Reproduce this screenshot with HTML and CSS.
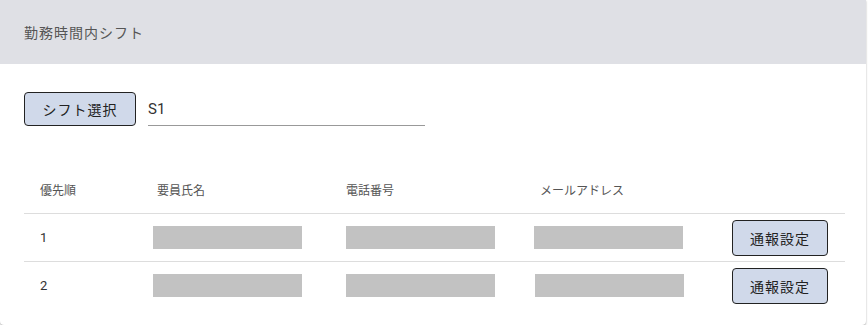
FILE: index.html
```html
<!DOCTYPE html>
<html lang="ja">

<head>
    <meta charset="UTF-8">
    <meta name="viewport" content="width=device-width, initial-scale=1.0">
    <title>勤務時間内シフト</title>
    <link rel="stylesheet" href="styles.css">
</head>

<body>
    <div class="card">
        <div class="card-header">勤務時間内シフト</div>
        <div class="card-body">
            <div class="shift-row">
                <button type="button" class="btn">シフト選択</button>
                <input type="text" class="shift-input" value="S1">
            </div>

            <div class="table">
                <div class="row head">
                    <div class="cell">優先順</div>
                    <div class="cell name-head">要員氏名</div>
                    <div class="cell">電話番号</div>
                    <div class="cell mail-head">メールアドレス</div>
                    <div class="cell"></div>
                </div>
                <div class="row">
                    <div class="cell">1</div>
                    <div class="cell"><span class="masked"></span></div>
                    <div class="cell"><span class="masked"></span></div>
                    <div class="cell"><span class="masked"></span></div>
                    <div class="cell"><button type="button" class="btn btn-small">通報設定</button></div>
                </div>
                <div class="row last">
                    <div class="cell">2</div>
                    <div class="cell"><span class="masked"></span></div>
                    <div class="cell"><span class="masked"></span></div>
                    <div class="cell"><span class="masked shift"></span></div>
                    <div class="cell"><button type="button" class="btn btn-small">通報設定</button></div>
                </div>
            </div>
        </div>
    </div>
</body>

</html>
```

FILE: styles.css
```css
body {
    margin: 0;
    font-family: Roboto, "Noto Sans CJK JP", sans-serif;
    color: #333;
    background-color: #fff;
}

.card {
    width: 866px;
    height: 325px;
    background-color: #fff;
    border-radius: 0 0 4px 4px;
    box-shadow: 0 1px 2px rgba(0, 0, 0, 0.35);
    overflow: hidden;
}

.card-header {
    height: 64px;
    padding: 0 24px;
    display: flex;
    align-items: center;
    background-color: #dfe0e5;
    color: #555;
    font-size: 14px;
    letter-spacing: 1px;
}

.card-body {
    padding: 28px 21px 0 24px;
}

.shift-row {
    display: flex;
    align-items: center;
    gap: 12px;
}

.btn {
    height: 34px;
    padding: 0 16px;
    font-family: inherit;
    font-size: 14px;
    letter-spacing: 1px;
    color: #222;
    background-color: #d0d9ea;
    border: 1px solid #222;
    border-radius: 4px;
    cursor: pointer;
}

.shift-row .btn {
    width: 112px;
    padding: 0;
}

.shift-input {
    width: 277px;
    height: 33px;
    padding: 0;
    border: none;
    border-bottom: 1px solid #999;
    font-family: inherit;
    font-size: 15px;
    color: #333;
    outline: none;
}

.table {
    margin-top: 39px;
}

.row {
    display: grid;
    grid-template-columns: 113px 193px 188px 198px 129px;
    height: 47px;
    align-items: center;
    border-bottom: 1px solid #ddd;
}

.row.last {
    border-bottom: none;
}

.head {
    height: 48px;
    font-size: 12px;
    color: #555;
}

.cell {
    padding-left: 16px;
    font-size: inherit;
}

.row:not(.head) .cell {
    font-size: 13px;
}

.name-head {
    padding-left: 20px;
}

.mail-head {
    padding-left: 22px;
}

.masked {
    display: block;
    width: 149px;
    height: 23px;
    background-color: #c2c2c2;
}

.masked.shift {
    margin-left: 1px;
}

.btn-small {
    width: 96px;
    height: 36px;
    padding: 0;
}
```
